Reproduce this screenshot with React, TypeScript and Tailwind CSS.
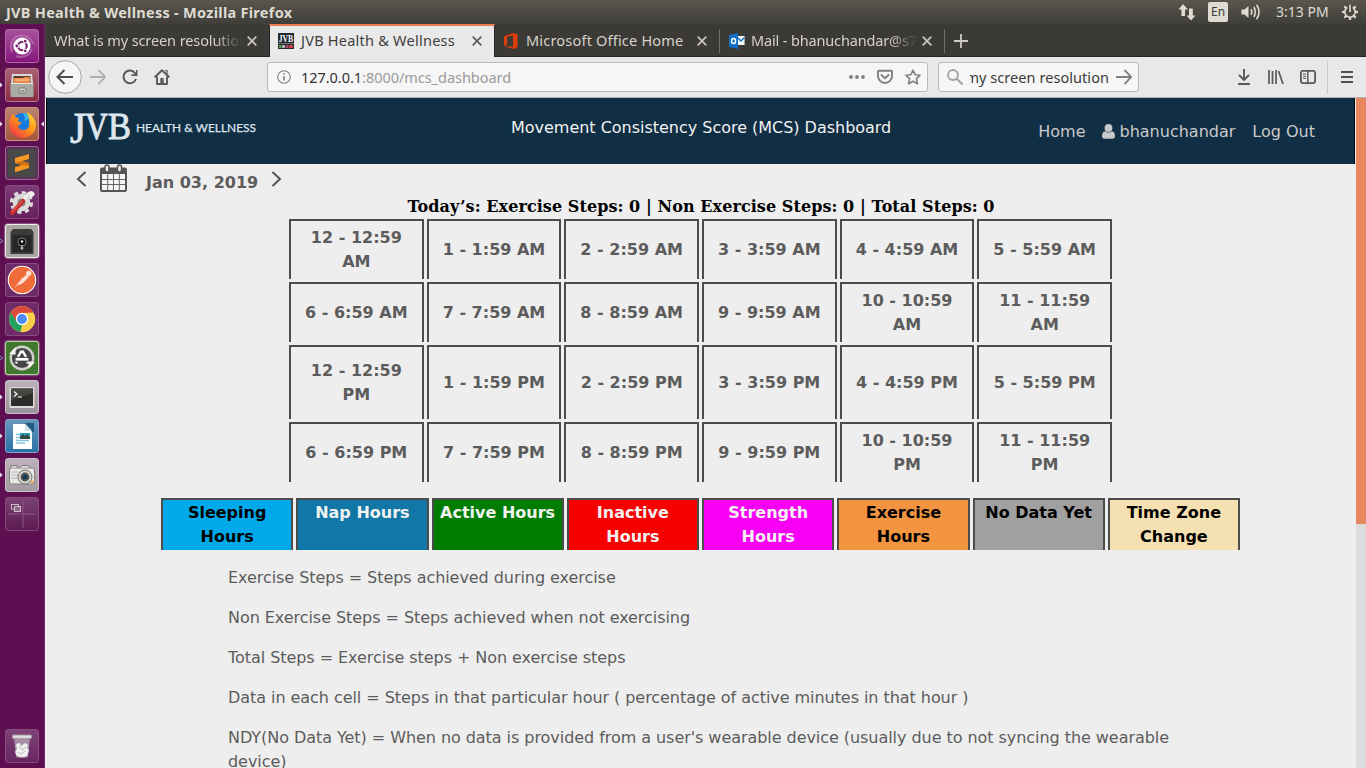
import React from "react";

const S = ({ size = 16, className = "", children, vb = 16 }: { size?: number; className?: string; children: React.ReactNode; vb?: number }) => (
  <svg width={size} height={size} viewBox={`0 0 ${vb} ${vb}`} fill="none" className={`block shrink-0 ${className}`}>
    {children}
  </svg>
);

const Close = ({ dark = false }: { dark?: boolean }) => (
  <S size={10} vb={10}>
    <path d="M0.7 0.7 L9.3 9.3 M9.3 0.7 L0.7 9.3" stroke={dark ? "#5c5c5c" : "#c9c6bf"} strokeWidth="1.7" />
  </S>
);

const TitleBar = () => (
  <header className="flex h-6 shrink-0 items-center justify-between bg-linear-to-b from-[#59564d] to-[#3f3e39] pl-[6px] pr-[8px] text-[#dfdbd2]">
    <h1 className="whitespace-nowrap text-[14.5px] font-bold leading-6 tracking-[0.28px]">JVB Health &amp; Wellness - Mozilla Firefox</h1>
    <div className="flex items-center">
      <svg width="18" height="18" viewBox="0 0 18 18" fill="#dfdbd2" className="mr-3">
        <path d="M5 1 L10 6.5 H7 V13 H3.4 V6.5 H0.5 Z" />
        <path d="M13 17.5 L17.5 12.5 H14.8 V5.5 H11 V12.5 H8.5 Z" />
      </svg>
      <span className="mr-[13px] flex h-5 w-5 items-center justify-center rounded-[2px] bg-[#dfdbd2] text-[12px] text-[#3f3e39]">En</span>
      <svg width="20" height="18" viewBox="0 0 20 18" fill="none" stroke="#dfdbd2" strokeWidth="1.6" className="mr-[15px]">
        <path d="M0.5 6.5 H3.5 L7.5 3 V15 L3.5 11.5 H0.5 Z" fill="#dfdbd2" stroke="none" />
        <path d="M10 6.3 Q11.7 9 10 11.7" />
        <path d="M12.8 4 Q15.8 9 12.8 14" />
        <path d="M15.6 1.8 Q20.4 9 15.6 16.2" />
      </svg>
      <span className="mr-[13px] w-[53px] whitespace-nowrap text-[14px] leading-6">3:13 PM</span>
      <S size={16}>
        <circle cx="8" cy="8" r="5.2" stroke="#dfdbd2" strokeWidth="1.6" />
        {[45, 90, 135, 180, 225, 270, 315].map((a) => (
          <path key={a} d="M8 0 V3" stroke="#dfdbd2" strokeWidth="2.2" transform={`rotate(${a} 8 8)`} />
        ))}
        <path d="M8 0 V8" stroke="#48463f" strokeWidth="5" />
        <path d="M8 0.5 V8" stroke="#dfdbd2" strokeWidth="1.7" />
      </S>
    </div>
  </header>
);

const tileBase = "flex h-[34px] w-[34px] shrink-0 items-center justify-center rounded-[3px] border";

const Tile = ({ cls, mark, focus = false, children }: { cls: string; mark?: "dot" | "ring"; focus?: boolean; children: React.ReactNode }) => (
  <div className="flex h-[34px] w-full items-center">
    <div className="flex w-[5px] items-center">
      {mark === "dot" && <svg width="3" height="6" viewBox="0 0 3 6"><path d="M0 0.5 L2.6 3 L0 5.5 Z" fill="#e6dfe6" /></svg>}
      {mark === "ring" && <svg width="4" height="6" viewBox="0 0 4 6"><path d="M0 0.8 L2.6 3 L0 5.2" stroke="#7fa5dd" fill="none" /></svg>}
    </div>
    <div className={`${tileBase} ${cls}`}>{children}</div>
    <div className="flex w-[5px] items-center justify-end">
      {focus && <svg width="3" height="6" viewBox="0 0 3 6"><path d="M3 0.3 L0 3 L3 5.7 Z" fill="#e6dfe6" /></svg>}
    </div>
  </div>
);

const Launcher = () => (
  <nav className="flex w-[45px] shrink-0 flex-col border-r border-[#6f2a66] bg-[#5d0f51] pt-[5px]">
    <div className="flex flex-col gap-[5px]">
      <Tile cls="border-[#b664ab] bg-linear-to-b from-[#a8519b] to-[#84137c]">
        <S size={28} vb={28}>
          <path d="M4 20 A12 12 0 0 1 10 4 M10 4 A12 12 0 0 1 25 12 M24 17 A12 12 0 0 1 8 24" stroke="#c58abd" strokeWidth="2" opacity=".55" />
          <circle cx="14" cy="14" r="8.6" fill="#fff" />
          <circle cx="14.4" cy="14" r="4.3" stroke="#731a68" strokeWidth="2.1" />
          {[60, 180, 300].map((a) => (
            <g key={a} transform={`rotate(${a} 14.4 14)`}>
              <circle cx="20" cy="14" r="2.3" fill="#fff" />
              <circle cx="20" cy="14" r="1.4" fill="#731a68" />
            </g>
          ))}
        </S>
      </Tile>
      <Tile mark="dot" cls="border-[#b9738a] bg-linear-to-b from-[#aa6276] to-[#8b2c43]">
        <S size={28} vb={28}>
          <path d="M4 3 H24 L25 13 H3 Z" fill="#d9d8d5" />
          <path d="M5.5 5 H22.5 V12 H5.5 Z" fill="#5a3b2b" />
          <path d="M6 7 H15 L16 6 H22 V12 H6 Z" fill="#ee8848" />
          <path d="M7 9 H21" stroke="#f9d2a8" />
          <rect x="2.5" y="12" width="23" height="14" rx="1" fill="#aaa9a5" />
          <path d="M3 12.5 H25" stroke="#e5e4e1" />
          <rect x="11" y="17" width="7" height="5" rx="1" fill="#d9d8d6" stroke="#747371" />
          <path d="M12.5 19.8 H16.5" stroke="#555" />
        </S>
      </Tile>
      <Tile mark="dot" focus cls="border-[#c99383] bg-linear-to-b from-[#ba8270] to-[#a5563d]">
        <S size={29} vb={28}>
          <defs>
            <linearGradient id="fx" x1="1" y1="0" x2="0.1" y2="1">
              <stop offset="0" stopColor="#ffe53f" />
              <stop offset=".45" stopColor="#ff9a16" />
              <stop offset="1" stopColor="#f02c4a" />
            </linearGradient>
          </defs>
          <circle cx="14" cy="14" r="11" fill="#1679dd" />
          <path d="M14 3 Q20 3 22 7 L16 11 Q17 6 14 3 Z" fill="#38b7e9" />
          <path d="M2 8 Q4 3 6 5 Q7 8 10 7.5 Q11 9 9.5 11 L13 12 Q13 14 10 15 Q10 19 15 19.5 Q21 19 20.5 12 Q21 7 18 2 Q26 6 27 14 Q27 25 15 27 Q4 27 1.5 17 Q1 12 2 8 Z" fill="url(#fx)" />
        </S>
      </Tile>
      <Tile cls="border-[#9b6892] bg-[#5e3057]">
        <S size={28} vb={28}>
          <rect width="28" height="28" rx="2" fill="#494949" />
          <path d="M7 9 L21 5 V10 L14 12 L21 14.2 V19 L7 23.3 V18.3 L14 16 L7 14 Z" fill="#f89822" />
          <path d="M7 14 L14 12 L21 14.2 V17 L14 16 Z" fill="#cf6e12" />
        </S>
      </Tile>
      <Tile cls="border-[#8b4c84] bg-linear-to-b from-[#7b3b74] to-[#66205c]">
        <S size={28} vb={28}>
          <circle cx="13.5" cy="14.5" r="8.8" fill="#dcdcda" />
          <circle cx="13.5" cy="14.5" r="10" stroke="#dcdcda" strokeWidth="3.2" strokeDasharray="4.2 3.65" />
          <circle cx="13.5" cy="14.5" r="4" fill="#8a8a88" />
          <path d="M16 11 L20 6 M20 6 Q24 3 25 6 L22 9" stroke="#f1f1f0" strokeWidth="3.2" />
          <path d="M4 25 L15 13" stroke="#c62d2b" strokeWidth="4.2" strokeLinecap="round" />
          <path d="M4 24 L14 13" stroke="#ed7371" strokeWidth="1" />
        </S>
      </Tile>
      <Tile mark="ring" cls="border-[#eeeceb] bg-[#aaa6a4] shadow-[0_0_2px_#fff]">
        <S size={28} vb={28}>
          <path d="M2.5 5 L5 2 H23 L25.5 5 V27 H2.5 Z" fill="#3b3b3a" />
          <path d="M4.5 8 H23.5 V25 H4.5 Z" fill="#272727" />
          <circle cx="14" cy="15" r="4" stroke="#777" strokeWidth="1" fill="#111" />
          <circle cx="14" cy="14.5" r="1.2" fill="#f4f4f4" />
          <path d="M14 18 V23 M12.5 21 H15.5" stroke="#ddd" />
        </S>
      </Tile>
      <Tile cls="border-[#8b4c84] bg-[#6f2b67]">
        <S size={30} vb={28}>
          <circle cx="14" cy="14" r="12.8" fill="#f26b3a" stroke="#fff" strokeWidth="1" />
          <path d="M6 22 L14 14 L16 16 L10 19 Z M13.5 13.5 L18 9 L20.5 11 L15.5 16 Z" fill="#fde3d6" />
          <circle cx="20.3" cy="7.8" r="2.5" fill="#fde3d6" />
          <path d="M10 18 L15 12 M12 18 L18 13" stroke="#fde3d6" />
        </S>
      </Tile>
      <Tile cls="border-[#8b4c84] bg-[#6f2b67]">
        <S size={28} vb={28}>
          <circle cx="14" cy="14" r="13" fill="#f7d04b" />
          <path d="M2.8 7.4 A13 13 0 0 1 25.3 7.5 L14 8 L8.4 17.2 Z" fill="#db4a3c" />
          <path d="M2.8 7.4 L8.7 17 L14 20 L12.5 26.9 A13 13 0 0 1 2.8 7.4 Z" fill="#24a15e" />
          <path d="M14 8 H25.6 A13 13 0 0 1 12.5 27 L19.2 17 Z" fill="#f9cf48" />
          <circle cx="14" cy="14" r="6.2" fill="#fff" />
          <circle cx="14" cy="14" r="4.9" fill="#4c8bf5" />
        </S>
      </Tile>
      <Tile mark="ring" cls="border-[#bdd2ac] bg-[#40782f] shadow-[0_0_2px_#d5e5cb]">
        <S size={30} vb={28}>
          <circle cx="14" cy="14" r="10.5" fill="#454545" stroke="#d0d0cc" strokeWidth="2.2" />
          <path d="M2 10 L8 4 V11 Z M26 18 L20 24 V17 Z" fill="#f5f5f3" />
          <path d="M13.2 8 L10.2 13 M14.8 8 L17.8 13 M9 17.5 L8.5 19 M19 17.5 L19.5 19 M12 8.2 H16" stroke="#fff" strokeWidth="2.2" />
          <path d="M8 15.2 H20" stroke="#fff" strokeWidth="2.5" />
        </S>
      </Tile>
      <Tile mark="dot" cls="border-[#cbc0ca] bg-linear-to-b from-[#bdb2bb] to-[#9c929b]">
        <S size={28} vb={28}>
          <rect x="1.5" y="4" width="25" height="21" rx="1" fill="#d9d9d5" />
          <rect x="3" y="5.5" width="22" height="17.5" fill="#2c2d2a" />
          <path d="M3 5.5 H25 V10 L3 17 Z" fill="#454641" />
          <path d="M6 8.5 L9 11 L6 13.5 M10 14 H14" stroke="#fff" strokeWidth="1.2" />
        </S>
      </Tile>
      <Tile mark="dot" cls="border-[#7fa6c8] bg-linear-to-b from-[#6795bb] to-[#2972a8]">
        <S size={28} vb={28}>
          <path d="M5 2 H17 L24 9 V27 H5 Z" fill="#fff" />
          <path d="M17 1 H26 V10 H24 Z" fill="#245b83" />
          <path d="M17 2 L24 9 H17 Z" fill="#d4e4ee" />
          <rect x="12" y="11" width="10" height="6" fill="#269fbe" />
          <path d="M12 15 L15 12 L17 14 L19 12 L22 15 V17 H12 Z" fill="#354b3c" />
          <path d="M8 12.5 H12 M8 15.5 H12 M8 18.5 H21 M8 21 H17" stroke="#85c3df" strokeWidth="1.6" />
        </S>
      </Tile>
      <Tile mark="dot" cls="border-[#cbc0ca] bg-linear-to-b from-[#bdb2bb] to-[#a49aa3]">
        <S size={28} vb={28}>
          <rect x="1.5" y="7" width="25" height="16" rx="2" fill="#e7e7e4" stroke="#85837f" />
          <path d="M3 7 V4.5 H9 V7 M12 7 L14 4.5 H20 L22 7" fill="#d3d2ce" stroke="#85837f" />
          <path d="M3 11 H10 M3 14 H10 M3 17 H10" stroke="#bbb" />
          <circle cx="17" cy="16" r="7" fill="#d3d3d0" stroke="#75736f" />
          <circle cx="17" cy="16" r="4.4" fill="#50504f" />
          <circle cx="17" cy="16" r="2.3" fill="#123b61" />
          <rect x="23" y="20" width="2.5" height="2" fill="#ef9a2a" />
        </S>
      </Tile>
      <Tile cls="border-[#834879] bg-linear-to-b from-[#7b4373] to-[#5d1953]">
        <S size={30} vb={30}>
          <path d="M16 1 V29 M1 15 H29" stroke="#89577f" />
          <rect x="4.5" y="5.5" width="7" height="4.5" stroke="#d0bdcd" />
          <rect x="7.5" y="7.5" width="6" height="5" fill="#8d6888" stroke="#d0bdcd" />
        </S>
      </Tile>
    </div>
    <div className="mt-auto pb-[5px]">
      <Tile cls="border-[#8b4c84] bg-linear-to-b from-[#7d4376] to-[#682560]">
        <S size={28} vb={28}>
          <path d="M6 6 H22 L20 25 Q14 27 8 25 Z" fill="#a68fa5" />
          <path d="M8 12 L12 11 L13 14 L17 11 L20 13 L19 16 L21 18 L19 24 Q14 26 9 24 L7 20 L9 17 Z" fill="#efefef" />
          <path d="M11 14 L14 18 L18 15 M10 20 L13 22 L17 19" stroke="#bbb" />
          <rect x="4.5" y="3" width="19" height="3.5" rx="1" fill="#ddd9dc" stroke="#a79aa5" />
        </S>
      </Tile>
    </div>
  </nav>
);

const Tabs = () => (
  <div className="flex h-[33px] shrink-0 bg-[#3c3a36] text-[14.5px] text-[#d6d2ca]">
    <div className="flex w-[224px] items-center border-b border-[#28212a] pl-[9px] pt-0.5">
      <span className="w-[188px] overflow-hidden whitespace-nowrap tracking-[-0.1px] [mask-image:linear-gradient(to_right,black_160px,transparent_188px)]">What is my screen resolution</span>
      <span className="ml-[5px]"><Close /></span>
    </div>
    <div className="flex w-[226px] items-center border-x border-x-[#28252a] border-t-2 border-t-[#ea7f55] bg-[#e9e9e9] pb-0.5 pl-2 text-[#3d3d3d]">
      <S size={16}>
        <rect width="16" height="16" fill="#222a2e" />
        <text x="0.7" y="8.5" fontSize="9.5" textLength="14.5" lengthAdjust="spacingAndGlyphs" fill="#fff" fontFamily="Liberation Serif" fontWeight="bold">JVB</text>
        <rect y="10" width="16" height="1" fill="#777" />
        <path d="M1 13.5 H3.5" stroke="#5ba761" strokeWidth="3" />
        <path d="M4.3 13.5 H6.8" stroke="#c9c9c9" strokeWidth="3" />
        <path d="M7.6 13.5 H10" stroke="#a1536e" strokeWidth="3" />
        <path d="M10.6 13.5 H15" stroke="#c9404a" strokeWidth="3" />
      </S>
      <span className="ml-[7px] w-[171px] whitespace-nowrap tracking-[0.24px]">JVB Health &amp; Wellness</span>
      <Close dark />
    </div>
    <div className="flex w-[224px] items-center border-b border-[#28212a] pl-[9px] pt-0.5">
      <svg width="14" height="16" viewBox="0 0 14 16">
        <path d="M0 3.2 L9 0 L13.5 1.3 V14.7 L9 16 L0 12.9 L9 13.9 V2.4 L3.2 3.8 V11.5 L0 12.9 Z" fill="#dc3e0b" />
      </svg>
      <span className="ml-2 w-[171px] whitespace-nowrap tracking-[0.2px]">Microsoft Office Home</span>
      <Close />
    </div>
    <div className="flex w-[225px] items-center border-b border-[#28212a] pt-0.5">
      <span className="h-6 w-px bg-[#706e69]" />
      <svg width="16" height="16" viewBox="0 0 16 16" className="ml-[9px]">
        <path d="M0 2 L9 0 V16 L0 14 Z" fill="#0f6fc4" />
        <path d="M9 3 H15.6 V12 H9 Z" fill="#f2f7fb" />
        <path d="M9 5 L12 8 L15.5 4.5" stroke="#0f6fc4" strokeWidth="1.4" fill="none" />
        <ellipse cx="4.6" cy="8" rx="2" ry="2.5" stroke="#fff" strokeWidth="1.4" fill="none" />
      </svg>
      <span className="ml-[6px] w-[169px] overflow-hidden whitespace-nowrap tracking-[-0.15px] [mask-image:linear-gradient(to_right,black_138px,transparent_166px)]">Mail - bhanuchandar@s7w</span>
      <span className="ml-[2px]"><Close /></span>
    </div>
    <div className="flex flex-1 items-center border-b border-[#28212a] pt-0.5">
      <span className="h-6 w-px bg-[#706e69]" />
      <S size={14} vb={14} className="ml-[9px]"><path d="M7 0 V14 M0 7 H14" stroke="#cfccc5" strokeWidth="1.8" /></S>
    </div>
  </div>
);

const Btn = ({ children, cls = "" }: { children: React.ReactNode; cls?: string }) => (
  <div className={`flex w-8 shrink-0 items-center justify-center ${cls}`}>{children}</div>
);

const Toolbar = () => (
  <div className="flex h-[41px] shrink-0 items-center border-b border-[#b5b4b2] bg-[#e9e8e8] text-[14px]">
    <Btn cls="ml-1">
      <svg width="34" height="34" viewBox="0 0 34 34" fill="none" className="shrink-0">
        <circle cx="17" cy="17" r="16.3" fill="#f6f6f6" stroke="#a3a3a3" />
        <path d="M25 17 H10 M16.5 10 L9.5 17 L16.5 24" stroke="#4c4c4c" strokeWidth="2" />
      </svg>
    </Btn>
    <Btn cls="ml-px"><S><path d="M0 8 H15 M8.5 1 L15.3 8 L8.5 15" stroke="#afafaf" strokeWidth="1.8" /></S></Btn>
    <Btn><S><path d="M13.2 4.2 A6.4 6.4 0 1 0 14 10" stroke="#595959" strokeWidth="2" /><path d="M15.5 1 V7 H9.5 V5.3 H12 L14 3.2 V1 Z" fill="#595959" /></S></Btn>
    <Btn><S><path d="M0.7 8.3 L8 1.2 L15.3 8.3 M3 7.5 V15 H13 V7.5" stroke="#595959" strokeWidth="1.9" strokeLinejoin="round" /><path d="M11.3 1.7 H13 V5" stroke="#595959" strokeWidth="1.2" /><path d="M6.3 9 H9.7 V14.5 H6.3 Z" fill="#595959" /></S></Btn>
    <div className="ml-[89px] flex h-[30px] w-[661px] items-center rounded-[3px] border border-[#bdbab4] bg-[#f6f6f6] pl-[9px] pr-[6px]">
      <S size={14} vb={14}><circle cx="7" cy="7" r="6.3" stroke="#7c7c7c" strokeWidth="1.1" /><path d="M7 6 V10.5" stroke="#7c7c7c" strokeWidth="1.6" /><circle cx="7" cy="3.8" r="0.9" fill="#7c7c7c" /></S>
      <span className="ml-[10px] mt-0.5 whitespace-nowrap text-[14.5px] tracking-[-0.04px] text-[#9a9a9a]"><span className="text-[#333]">127.0.0.1</span>:8000/mcs_dashboard</span>
      <div className="ml-auto flex items-center">
        <svg width="16" height="4" viewBox="0 0 16 4" fill="#7f7f7f"><circle cx="2" cy="2" r="1.9" /><circle cx="8" cy="2" r="1.9" /><circle cx="14" cy="2" r="1.9" /></svg>
        <S className="ml-3"><path d="M1.8 1.8 H14.2 Q15 1.8 15 2.6 V7 A7 7 0 0 1 1 7 V2.6 Q1 1.8 1.8 1.8 Z" stroke="#7f7f7f" strokeWidth="1.9" /><path d="M4.5 6 L8 9.2 L11.5 6" stroke="#7f7f7f" strokeWidth="1.9" strokeLinecap="round" /></S>
        <S className="ml-3"><path d="M8 1.2 L10.1 5.7 L15 6.3 L11.4 9.7 L12.4 14.7 L8 12.2 L3.6 14.7 L4.6 9.7 L1 6.3 L5.9 5.7 Z" stroke="#7f7f7f" strokeWidth="1.6" strokeLinejoin="round" /></S>
      </div>
    </div>
    <div className="ml-[10px] flex h-[30px] w-[201px] items-center rounded-[3px] border border-[#bdbab4] bg-[#f6f6f6] pl-2 pr-[6px] text-[#3b3b3b]">
      <S><circle cx="6" cy="6" r="5" stroke="#a0a0a0" strokeWidth="1.8" /><path d="M9.7 9.7 L15.5 15.5" stroke="#a0a0a0" strokeWidth="2" /></S>
      <span className="ml-[7px] mt-px flex w-[139px] justify-end overflow-hidden whitespace-nowrap text-[14.5px] tracking-[0.06px]">my screen resolution</span>
      <S className="ml-auto"><path d="M0 8 H15 M8.5 1 L15.3 8 L8.5 15" stroke="#808080" strokeWidth="1.8" /></S>
    </div>
    <div className="ml-auto flex h-full items-center">
      <Btn><svg width="14" height="16" viewBox="0 0 14 16" stroke="#595959" strokeWidth="1.9" fill="none"><path d="M7 0 V10.5 M2 6 L7 11 L12 6 M1 15 H13" /></svg></Btn>
      <Btn><svg width="16" height="14" viewBox="0 0 16 14" stroke="#595959" strokeWidth="1.7" fill="none"><path d="M1 0 V14 M4.5 1 V14 M8 0 V14 M10.5 1 L15 14" /></svg></Btn>
      <Btn><svg width="16" height="14" viewBox="0 0 16 14" stroke="#595959" fill="none"><rect x="0.9" y="0.9" width="14.2" height="12.2" rx="2" strokeWidth="1.8" /><path d="M7.8 1 V13" strokeWidth="1.5" /><path d="M3 4 H6 M3 6.2 H6 M3 8.4 H6" strokeWidth="1" /></svg></Btn>
      <span className="ml-[3px] h-[33px] w-px bg-[#c8c8c8]" />
      <svg width="12" height="12" viewBox="0 0 12 12" stroke="#4f4f4f" strokeWidth="1.8" className="ml-[13px] mr-[13px]"><path d="M0 1 H12 M0 6 H12 M0 11 H12" /></svg>
    </div>
  </div>
);

const times = [
  ["12 - 12:59 AM", "1 - 1:59 AM", "2 - 2:59 AM", "3 - 3:59 AM", "4 - 4:59 AM", "5 - 5:59 AM"],
  ["6 - 6:59 AM", "7 - 7:59 AM", "8 - 8:59 AM", "9 - 9:59 AM", "10 - 10:59 AM", "11 - 11:59 AM"],
  ["12 - 12:59 PM", "1 - 1:59 PM", "2 - 2:59 PM", "3 - 3:59 PM", "4 - 4:59 PM", "5 - 5:59 PM"],
  ["6 - 6:59 PM", "7 - 7:59 PM", "8 - 8:59 PM", "9 - 9:59 PM", "10 - 10:59 PM", "11 - 11:59 PM"],
];

const legend = [
  ["Sleeping Hours", "bg-[#00a9ea] text-black"],
  ["Nap Hours", "bg-[#1077a6] text-[#f2f2f2]"],
  ["Active Hours", "bg-[#007d00] text-[#f2f2f2]"],
  ["Inactive Hours", "bg-[#f70000] text-[#f2f2f2]"],
  ["Strength Hours", "bg-[#f700f5] text-[#f2f2f2]"],
  ["Exercise Hours", "bg-[#f39440] text-black"],
  ["No Data Yet", "bg-[#a0a0a0] text-black"],
  ["Time Zone Change", "bg-[#f4e0b0] text-black"],
];

const notes = [
  "Exercise Steps = Steps achieved during exercise",
  "Non Exercise Steps = Steps achieved when not exercising",
  "Total Steps = Exercise steps + Non exercise steps",
  "Data in each cell = Steps in that particular hour ( percentage of active minutes in that hour )",
  "NDY(No Data Yet) = When no data is provided from a user's wearable device (usually due to not syncing the wearable device)",
];

const Page = () => (
  <div className="flex min-h-0 flex-1 bg-[#eeeeee] font-['DejaVu_Sans',sans-serif] text-[16px] leading-6">
    <main className="flex min-w-0 flex-1 flex-col overflow-hidden pl-px">
      <header className="mr-px flex h-[66px] shrink-0 items-start border-x border-black bg-[#102e44]">
        <svg width="200" height="50" viewBox="0 0 200 50" className="ml-5 mt-1 shrink-0" fill="#dfe6ee">
          <g fontFamily="Liberation Serif, serif" stroke="#dfe6ee" strokeWidth="0.9">
            <text x="3" y="41" fontSize="45" textLength="16" lengthAdjust="spacingAndGlyphs">J</text>
            <text x="18" y="37" fontSize="38.5" textLength="23" lengthAdjust="spacingAndGlyphs">V</text>
            <text x="41" y="37" fontSize="38.5" textLength="23" lengthAdjust="spacingAndGlyphs">B</text>
          </g>
          <text x="69" y="29.7" fontSize="12.2" textLength="120" lengthAdjust="spacingAndGlyphs" fontFamily="Lato, sans-serif" stroke="#dfe6ee" strokeWidth="0.25">HEALTH &amp; WELLNESS</text>
        </svg>
        <h2 className="ml-[244px] mt-[18px] whitespace-nowrap tracking-[-0.02px] text-[#f2f2f2]">Movement Consistency Score (MCS) Dashboard</h2>
        <nav className="ml-auto mr-[39px] mt-[22px] flex whitespace-nowrap text-[#c9c9c9]">
          <a>Home</a>
          <a className="ml-4 flex items-center">
            <svg width="13" height="15" viewBox="0 0 13 15" fill="#c9c9c9" className="mb-0.5 mr-[5px]"><circle cx="6.5" cy="4" r="3.9" /><path d="M3 7.3 Q0 8 0 12.3 Q0 14.7 2.2 14.7 H10.8 Q13 14.7 13 12.3 Q13 8 10 7.3 Q6.5 9.8 3 7.3 Z" /></svg>
            bhanuchandar
          </a>
          <a className="ml-[17px]">Log Out</a>
        </nav>
      </header>
      <div className="flex h-[30px] shrink-0 items-start pl-[30px] font-bold text-[#5c5c5c]">
        <svg width="11" height="16" viewBox="0 0 11 16" className="mt-[7px]" stroke="#555" strokeWidth="2" fill="none"><path d="M9.5 1 L2 8 L9.5 15" /></svg>
        <svg width="27" height="28" viewBox="0 0 27 28" className="ml-[13px] shrink-0">
          <rect y="3.5" width="27" height="24.5" rx="2" fill="#555" />
          <path d="M2 10 H25 V26 H2 Z" fill="#f5f5f5" />
          <path d="M7.7 10 V26 M13.5 10 V26 M19.3 10 V26 M2 15.5 H25 M2 20.5 H25" stroke="#666" />
          <rect x="5" y="1" width="4" height="7" rx="2" fill="#eee" stroke="#555" strokeWidth="1.5" />
          <rect x="17.5" y="1" width="4" height="7" rx="2" fill="#eee" stroke="#555" strokeWidth="1.5" />
        </svg>
        <span className="ml-[19px] mt-[7px] whitespace-nowrap">Jan 03, 2019</span>
        <svg width="11" height="16" viewBox="0 0 11 16" className="ml-[13px] mt-[7px]" stroke="#555" strokeWidth="2" fill="none"><path d="M1.5 1 L9 8 L1.5 15" /></svg>
      </div>
      <h3 className="h-[25px] shrink-0 whitespace-nowrap text-center font-['DejaVu_Serif',serif] font-bold leading-[25px] tracking-[0.07px] text-black">Today’s: Exercise Steps: 0 | Non Exercise Steps: 0 | Total Steps: 0</h3>
      <div className="mr-px flex shrink-0 flex-col items-center gap-4 text-center font-bold">
        <div className="grid w-[823px] grid-cols-6 grid-rows-[60px_60px_74px_60px] gap-[3px] text-[#5c5c5c]">
          {times.flat().map((t) => (
            <div key={t} className="flex items-center justify-center border-x-2 border-t-2 border-[#4c4c4c] px-3">{t}</div>
          ))}
        </div>
        <div className="grid h-[52px] w-[1079px] grid-cols-8 gap-[3px]">
          {legend.map(([t, c]) => (
            <div key={t} className={`border-x-2 border-t-2 border-[#4c4c4c] px-[5px] pt-px ${c}`}>{t}</div>
          ))}
        </div>
      </div>
      <div className="ml-[182px] mt-4 flex w-[950px] flex-col gap-4 tracking-[-0.053px] text-[#5c5c5c]">
        {notes.map((n) => <p key={n}>{n}</p>)}
      </div>
    </main>
    <div className="w-[10px] shrink-0 bg-[#dcdcdc]"><div className="h-[426px] bg-[#e8875f]" /></div>
  </div>
);

export default function App() {
  return (
    <div className="flex h-[768px] w-[1366px] flex-col overflow-hidden font-['Noto_Sans',sans-serif]">
      <TitleBar />
      <div className="flex min-h-0 flex-1">
        <Launcher />
        <div className="flex min-w-0 flex-1 flex-col">
          <Tabs />
          <Toolbar />
          <Page />
        </div>
      </div>
    </div>
  );
}
